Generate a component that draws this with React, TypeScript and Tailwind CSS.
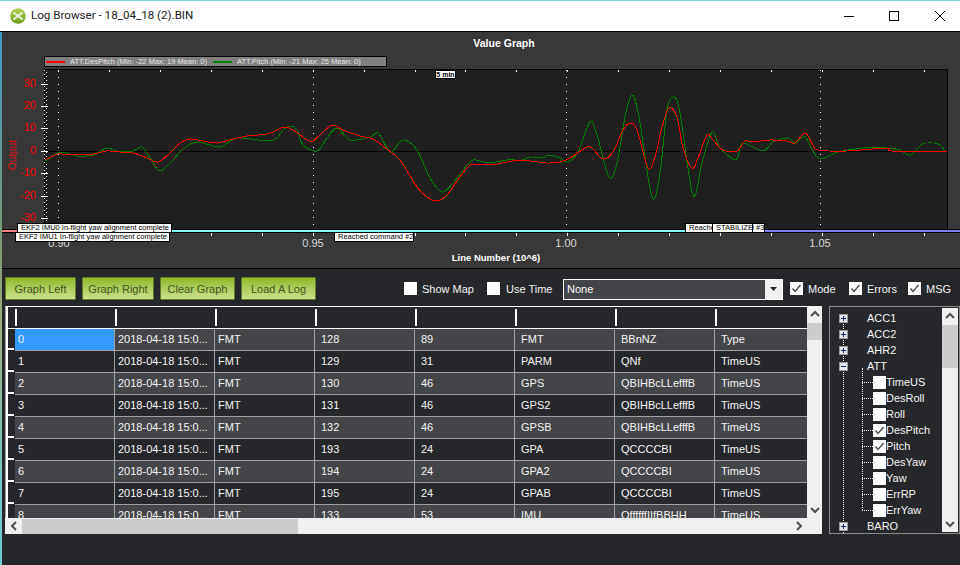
import React from "react";

type P = [number, number];

const red: P[] = [[45,160],[58,154],[70,155],[93,154],[107,151],[120,152],[133,153],[147,158],[158,162],[170,153],[180,143],[190,139],[203,141],[217,143],[233,139],[247,136],[267,134],[277,130],[284,127],[293,130],[307,140],[313,141],[323,132],[333,125],[343,130],[360,136],[373,139],[388,150],[400,160],[417,187],[427,197],[437,201],[447,195],[460,177],[470,165],[480,165],[497,164],[513,161],[530,161],[547,163],[560,162],[570,158],[587,147],[593,149],[603,159],[613,152],[623,130],[630,123],[637,130],[648,168],[655,157],[662,127],[669,108],[677,117],[683,148],[692,168],[698,158],[707,135],[713,140],[723,150],[737,151],[745,141],[753,142],[770,140],[787,141],[795,143],[805,133],[813,145],[818,150],[847,151],[887,148],[892,151],[947,151]];
const green: P[] = [[45,161],[58,153],[67,153],[77,156],[93,155],[107,148],[117,151],[133,151],[142,147],[150,158],[160,171],[173,160],[183,149],[197,142],[220,147],[237,138],[267,141],[277,138],[283,130],[290,126],[297,130],[303,145],[317,151],[327,138],[337,128],[350,140],[370,137],[378,133],[387,148],[392,152],[403,140],[417,150],[430,178],[442,192],[453,183],[467,165],[473,160],[480,161],[490,163],[507,160],[522,160],[530,157],[543,158],[548,155],[560,158],[568,162],[578,152],[590,122],[597,135],[609,177],[617,163],[625,117],[632,95],[639,117],[652,197],[660,173],[667,110],[674,97],[680,113],[693,195],[702,163],[712,132],[720,148],[733,159],[738,157],[743,143],[763,151],[773,142],[788,138],[795,143],[805,137],[817,157],[827,157],[838,152],[863,148],[887,148],[900,150],[910,155],[923,144],[938,144],[945,151]];

function smooth(p: P[]) {
  let d = `M${p[0][0]} ${p[0][1]}`;
  for (let i = 0; i < p.length - 1; i++) {
    const a = p[Math.max(i - 1, 0)], b = p[i], c = p[i + 1], e = p[Math.min(i + 2, p.length - 1)];
    const k = 0.16;
    d += ` C${b[0] + (c[0] - a[0]) * k} ${b[1] + (c[1] - a[1]) * k} ${c[0] - (e[0] - b[0]) * k} ${c[1] - (e[1] - b[1]) * k} ${c[0]} ${c[1]}`;
  }
  return d;
}

const ticks = Array.from({ length: 18 }, (_, i) => 58.2 + 50.9 * i);
const majors = [58.5, 313.5, 566.5, 820.5];
const yTicks: [string, number][] = [["30", 84], ["20", 106], ["10", 128], ["0", 151], ["-10", 173], ["-20", 196], ["-30", 218]];
const xLabels: [string, number][] = [["0.90", 59], ["0.95", 313], ["1.00", 566], ["1.05", 820]];

function Ann({ x, y, w, text }: { x: number; y: number; w: number; text: string }) {
  return (
    <div
      className="absolute h-[10px] bg-white border border-black text-black text-[7.5px] leading-[8px] pl-[3px] whitespace-nowrap overflow-hidden"
      style={{ left: x - 44, top: y - 69, width: w }}
    >
      {text}
    </div>
  );
}

function Plot() {
  return (
    <div className="relative z-10 ml-[42px] w-[904px] h-[164px] bg-[#1f1f1f] shrink-0">
      <svg viewBox="44 69 904 164" className="absolute inset-0 w-[904px] h-[164px] overflow-visible">
        <rect x="44.5" y="69.5" width="903" height="163" fill="none" stroke="#000" />
        <line x1="44" y1="151.5" x2="948" y2="151.5" stroke="#000" />
        {majors.map((x) => (
          <line key={x} x1={x} y1="70" x2={x} y2="232" stroke="#fff" strokeDasharray="1 6" shapeRendering="crispEdges" />
        ))}
        <line x1="44.5" y1="70" x2="44.5" y2="222" stroke="#fff" strokeDasharray="1 3" shapeRendering="crispEdges" />
        <line x1="46.5" y1="72" x2="46.5" y2="222" stroke="#fff" strokeDasharray="1 3" shapeRendering="crispEdges" />
        {yTicks.map(([l, y]) => (
          <line key={l} x1="41" y1={y + 0.5} x2="48" y2={y + 0.5} stroke="#fff" shapeRendering="crispEdges" />
        ))}
        {ticks.map((x) => (
          <g key={x}>
            <line x1={Math.round(x) + 0.5} y1="70" x2={Math.round(x) + 0.5} y2="72" stroke="#fff" shapeRendering="crispEdges" />
            <line x1={Math.round(x) + 0.5} y1="233" x2={Math.round(x) + 0.5} y2="236" stroke="#fff" shapeRendering="crispEdges" />
          </g>
        ))}
        <path d={smooth(green)} fill="none" stroke="#008000" strokeWidth="1" shapeRendering="crispEdges" />
        <path d={smooth(red)} fill="none" stroke="#ff0000" strokeWidth="1" shapeRendering="crispEdges" />
        <rect x="2" y="229" width="958" height="1" fill="#000" />
        <rect x="2" y="230" width="15" height="2" fill="#ff8080" />
        <rect x="17" y="230" width="748" height="2" fill="#80ffff" />
        <rect x="765" y="230" width="195" height="2" fill="#8080ff" />
        <rect x="2" y="232" width="958" height="1" fill="#000" />
      </svg>
      {yTicks.map(([l, y]) => (
        <span key={l} className="absolute w-[30px] text-right text-[11px] leading-[12px] text-[#ff0000]" style={{ left: -38, top: y - 69 - 7 }}>
          {l}
        </span>
      ))}
      <span className="absolute left-[-48px] top-[80px] w-[34px] text-center -rotate-90 text-[10px] leading-[12px] text-[#e01010]">Output</span>
      <div className="absolute left-[391px] top-[1px] w-[21px] h-[9px] bg-white border border-black text-black text-[7px] leading-[7px] font-bold text-center whitespace-nowrap">5 min</div>
      <Ann x={17} y={223} w={155} text="EKF2 IMU0 In-flight yaw alignment complete" />
      <Ann x={15} y={232} w={155} text="EKF2 IMU1 In-flight yaw alignment complete" />
      <Ann x={334} y={232} w={80} text="Reached command #2" />
      <Ann x={685} y={223} w={80} text="Reached command #3" />
      <Ann x={712} y={223} w={41} text="STABILIZE" />
    </div>
  );
}

function GraphPanel() {
  return (
    <div className="h-[236px] bg-[#383838] flex flex-col shrink-0">
      <div className="h-[24px] flex items-center justify-center text-white font-bold text-[10.5px] pl-[46px]">Value Graph</div>
      <div className="ml-[42px] w-[343px] h-[11px] bg-[#808080] border border-black flex items-center text-[7.5px] leading-[9px] text-[#e6e6e6] whitespace-nowrap shrink-0">
        <span className="ml-[1px] w-[19px] h-[2px] bg-[#ff0000] shrink-0" />
        <span className="ml-[5px] w-[142px] shrink-0">ATT.DesPitch (Min: -22 Max: 19 Mean: 0)</span>
        <span className="ml-[1px] w-[19px] h-[2px] bg-[#008000] shrink-0" />
        <span className="ml-[5px]">ATT.Pitch (Min: -21 Max: 25 Mean: 0)</span>
      </div>
      <div className="h-[2px] shrink-0" />
      <Plot />
      <div className="relative h-[35px] shrink-0">
        {xLabels.map(([l, x]) => (
          <span key={l} className="absolute top-[3px] w-[40px] text-center text-[11px] leading-[14px] text-[#d8d8d8]" style={{ left: x - 22 }}>
            {l}
          </span>
        ))}
        <div className="absolute top-[18px] left-0 w-[958px] pl-[30px] text-center text-white font-bold text-[9.5px] leading-[14px]">Line Number (10^6)</div>
      </div>
    </div>
  );
}

function Btn({ w, children }: { w: string; children: string }) {
  return (
    <button className={`${w} h-[23px] pt-[1px] border border-[#5f7d28] bg-gradient-to-b from-[#90b822] to-[#cde28c] text-[#44571f] text-[11px] leading-none rounded-[1px]`}>
      {children}
    </button>
  );
}

function Check({ checked }: { checked?: boolean }) {
  return (
    <span className="w-[13px] h-[13px] bg-white shrink-0 flex items-center justify-center">
      {checked && (
        <svg viewBox="0 0 13 13" className="w-[13px] h-[13px]">
          <path d="M2.5 6.5 L5 9.5 L10.5 3" fill="none" stroke="#4a4a4a" strokeWidth="1.4" />
        </svg>
      )}
    </span>
  );
}

function Labeled({ label, checked, gap, className }: { label: string; checked?: boolean; gap: string; className: string }) {
  return (
    <div className={`flex items-center text-[11px] text-[#f2f2f2] whitespace-nowrap ${className}`}>
      <Check checked={checked} />
      <span className={`${gap} pt-[1px]`}>{label}</span>
    </div>
  );
}

function Toolbar() {
  return (
    <div className="h-[23px] mt-[8px] pl-[3px] flex items-center shrink-0">
      <div className="flex gap-[6px]">
        <Btn w="w-[71px]">Graph Left</Btn>
        <Btn w="w-[72px]">Graph Right</Btn>
        <Btn w="w-[75px]">Clear Graph</Btn>
        <Btn w="w-[75px]">Load A Log</Btn>
      </div>
      <Labeled label="Show Map" gap="ml-[5px]" className="ml-[88px] w-[83px]" />
      <Labeled label="Use Time" gap="ml-[6px]" className="w-[76px]" />
      <div className="w-[220px] h-[21px] mt-[1px] border border-white bg-[#444548] flex items-center text-[11px] text-white">
        <span className="pl-[3px] flex-1">None</span>
        <span className="w-[17px] h-full bg-[#f0f0f0] flex items-center justify-center">
          <svg viewBox="0 0 7 4" className="w-[7px] h-[4px]"><path d="M0 0H7L3.5 4Z" fill="#222" /></svg>
        </span>
      </div>
      <Labeled label="Mode" checked gap="ml-[5px]" className="ml-[7px] w-[59px]" />
      <Labeled label="Errors" checked gap="ml-[5px]" className="w-[59px]" />
      <Labeled label="MSG" checked gap="ml-[5px]" className="" />
    </div>
  );
}

const rows: [string, string, string, string, string, string, string][] = [
  ["0", "FMT", "128", "89", "FMT", "BBnNZ", "Type"],
  ["1", "FMT", "129", "31", "PARM", "QNf", "TimeUS"],
  ["2", "FMT", "130", "46", "GPS", "QBIHBcLLefffB", "TimeUS"],
  ["3", "FMT", "131", "46", "GPS2", "QBIHBcLLefffB", "TimeUS"],
  ["4", "FMT", "132", "46", "GPSB", "QBIHBcLLefffB", "TimeUS"],
  ["5", "FMT", "193", "24", "GPA", "QCCCCBI", "TimeUS"],
  ["6", "FMT", "194", "24", "GPA2", "QCCCCBI", "TimeUS"],
  ["7", "FMT", "195", "24", "GPAB", "QCCCCBI", "TimeUS"],
  ["8", "FMT", "133", "53", "IMU", "QffffffIIfBBHH", "TimeUS"],
];

function Chevron({ dir, className }: { dir: "up" | "down" | "left" | "right"; className?: string }) {
  const d = { up: "M1 6 L5 2 L9 6", down: "M1 3 L5 7 L9 3", left: "M7 1 L3 5 L7 9", right: "M3 1 L7 5 L3 9" }[dir];
  return (
    <svg viewBox="0 0 10 10" className={`w-[10px] h-[10px] shrink-0 ${className ?? ""}`}>
      <path d={d} fill="none" stroke="#505050" strokeWidth="2" />
    </svg>
  );
}

function Cell({ w, pad, bg, children }: { w: string; pad: string; bg?: string; children?: React.ReactNode }) {
  return (
    <div className={`${w} ${pad} ${bg ?? ""} h-full shrink-0 border-r border-b border-[#a0a0a0] flex items-center overflow-hidden whitespace-nowrap`}>
      {children}
    </div>
  );
}

function DataGrid() {
  return (
    <div className="w-[817px] h-[228px] flex flex-col shrink-0">
      <div className="flex h-[212px]">
        <div className="w-[802px] overflow-hidden border-t border-l border-t-white border-l-[#a0a0a0] text-[11px] text-[#f4f4f4] bg-[#26272a]">
          <div className="h-[22px] flex items-stretch border-b border-white">
            <div className="w-[9px] border-l-2 border-white shrink-0" />
            {[0, 1, 2, 3, 4, 5, 6, 7].map((i) => (
              <div key={i} className="w-[100px] shrink-0 border-l-2 border-white my-[2px]" />
            ))}
          </div>
          {rows.map((r, i) => {
            const bg = i % 2 === 0 ? "bg-[#444548]" : "bg-[#26272a]";
            return (
              <div key={r[0]} className={`h-[22px] flex ${bg}`}>
                <div className="w-[9px] h-full shrink-0 bg-[#26272a] border-l-2 border-white flex items-end">
                  <span className="mb-[1px] w-[6px] h-[2px] bg-white" />
                </div>
                <Cell w="w-[100px]" pad="pl-[3px]" bg={i === 0 ? "bg-[#3399ff]" : ""}>{r[0]}</Cell>
                <Cell w="w-[100px]" pad="pl-[3px]">2018-04-18 15:0...</Cell>
                <Cell w="w-[100px]" pad="pl-[3px]">{r[1]}</Cell>
                <Cell w="w-[100px]" pad="pl-[6px]">{r[2]}</Cell>
                <Cell w="w-[100px]" pad="pl-[6px]">{r[3]}</Cell>
                <Cell w="w-[100px]" pad="pl-[6px]">{r[4]}</Cell>
                <Cell w="w-[100px]" pad="pl-[6px]">{r[5]}</Cell>
                <Cell w="w-[100px]" pad="pl-[6px]">{r[6]}</Cell>
              </div>
            );
          })}
        </div>
        <div className="w-[15px] bg-[#f0f0f0] flex flex-col items-center shrink-0">
          <div className="h-[17px] flex items-center"><Chevron dir="up" /></div>
          <div className="h-[17px] w-full bg-[#cdcdcd]" />
          <div className="flex-1" />
          <div className="h-[17px] flex items-center"><Chevron dir="down" /></div>
        </div>
      </div>
      <div className="h-[16px] bg-[#f0f0f0] flex items-center">
        <div className="w-[17px] flex justify-center"><Chevron dir="left" /></div>
        <div className="w-[276px] h-[15px] bg-[#cdcdcd]" />
        <div className="flex-1" />
        <div className="w-[17px] mr-[15px] flex justify-center"><Chevron dir="right" /></div>
      </div>
    </div>
  );
}

function Expander({ open }: { open?: boolean }) {
  return (
    <span className="w-[9px] h-[9px] bg-[#e4e7ee] border border-[#9a9a9a] shrink-0 relative flex items-center justify-center">
      <span className="w-[5px] h-px bg-[#1c2d6b]" />
      {!open && <span className="absolute w-px h-[5px] bg-[#1c2d6b]" />}
    </span>
  );
}

function Node({ label, open }: { label: string; open?: boolean }) {
  return (
    <div className="h-[16px] flex items-center">
      <Expander open={open} />
      <span className="ml-[19px]">{label}</span>
    </div>
  );
}

const children: [string, boolean][] = [
  ["TimeUS", false], ["DesRoll", false], ["Roll", false], ["DesPitch", true], ["Pitch", true],
  ["DesYaw", false], ["Yaw", false], ["ErrRP", false], ["ErrYaw", false],
];

function Tree() {
  return (
    <div className="w-[131px] h-[228px] ml-[7px] border border-[#8a8a8a] bg-[#26272a] flex shrink-0 overflow-hidden">
      <div className="flex-1 relative pl-[9px] pt-[3px] text-[11px] text-[#f4f4f4] overflow-hidden">
        <div className="absolute left-[13px] top-[10px] h-[216px] border-l border-dotted border-white" />
        <div className="relative">
          <Node label="ACC1" />
          <Node label="ACC2" />
          <Node label="AHR2" />
          <Node label="ATT" open />
          <div className="relative">
            <div className="absolute left-[23px] top-[-6px] h-[142px] border-l border-dotted border-white" />
            {children.map(([l, c]) => (
              <div key={l} className="h-[16px] flex items-center pl-[23px]">
                <span className="w-[11px] border-t border-dotted border-white shrink-0" />
                <Check checked={c} />
                <span>{l}</span>
              </div>
            ))}
          </div>
          <Node label="BARO" />
        </div>
      </div>
      <div className="w-[16px] mr-[1px] my-[1px] bg-[#f0f0f0] flex flex-col items-center shrink-0">
        <div className="h-[17px] flex items-center"><Chevron dir="up" /></div>
        <div className="h-[43px] w-full bg-[#cdcdcd]" />
        <div className="flex-1" />
        <div className="h-[17px] flex items-center"><Chevron dir="down" /></div>
      </div>
    </div>
  );
}

export default function App() {
  return (
    <div className="w-[960px] h-[565px] flex flex-col overflow-hidden bg-white font-['Liberation_Sans',Arial,sans-serif]">
      <div className="h-px bg-[#7fd6da] shrink-0" />
      <div className="h-[30px] flex items-center bg-white shrink-0 pl-[10px]">
        <svg viewBox="0 0 16 16" className="w-[16px] h-[16px] shrink-0">
          <defs>
            <linearGradient id="lg" x1="0" y1="0" x2="0" y2="1">
              <stop offset="0" stopColor="#b4d458" />
              <stop offset="1" stopColor="#6c9a1c" />
            </linearGradient>
          </defs>
          <circle cx="8" cy="8" r="7.8" fill="url(#lg)" />
          <path d="M3.5 4.5 L12.5 11.5 M12.5 4.5 L3.5 11.5" stroke="#eef3e0" strokeWidth="2" />
        </svg>
        <span className="ml-[5px] text-[11.6px] text-[#1a1a1a] font-['Roboto',sans-serif]">Log Browser - 18_04_18 (2).BIN</span>
        <div className="flex-1" />
        <svg viewBox="0 0 10 10" className="w-[10px] h-[10px] mr-[35px]"><line x1="0" y1="5.5" x2="10" y2="5.5" stroke="#000" shapeRendering="crispEdges" /></svg>
        <svg viewBox="0 0 10 10" className="w-[10px] h-[10px] mr-[36px]"><rect x="0.5" y="0.5" width="9" height="9" fill="none" stroke="#000" shapeRendering="crispEdges" /></svg>
        <svg viewBox="0 0 10 10" className="w-[10px] h-[10px] mr-[15px]"><path d="M0 0 L10 10 M10 0 L0 10" stroke="#000" strokeWidth="1" /></svg>
      </div>
      <div className="h-px bg-black shrink-0" />
      <div className="flex flex-1 min-h-0">
        <div className="w-[2px] shrink-0 bg-[linear-gradient(to_bottom,#3f97c8_0%,#7c9a72_40%,#9fae7c_55%,#6fc9c9_85%,#6fc9c9_100%)]" />
        <div className="w-[958px] flex flex-col bg-[#26272a]">
          <GraphPanel />
          <div className="h-px bg-black shrink-0" />
          <Toolbar />
          <div className="mt-[6px] pl-[3px] flex">
            <DataGrid />
            <Tree />
          </div>
        </div>
      </div>
    </div>
  );
}
